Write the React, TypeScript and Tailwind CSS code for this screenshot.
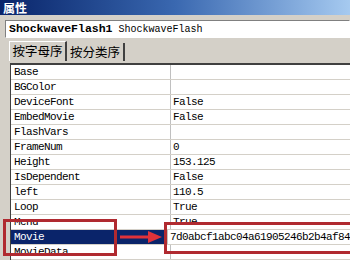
import React from "react";

const ROWS: [string, string][] = [
  ["Base", ""],
  ["BGColor", ""],
  ["DeviceFont", "False"],
  ["EmbedMovie", "False"],
  ["FlashVars", ""],
  ["FrameNum", "0"],
  ["Height", "153.125"],
  ["IsDependent", "False"],
  ["left", "110.5"],
  ["Loop", "True"],
  ["Menu", "True"],
  ["Movie", "7d0abcf1abc04a61905246b2b4af84"],
  ["MovieData", ""],
];

const mono = { fontFamily: '"Liberation Mono", "DejaVu Sans Mono", monospace' };
const cjk = { fontFamily: '"Noto Sans CJK SC", sans-serif' };

export default function App() {
  return (
    <div className="relative h-[260px] w-[350px] overflow-hidden bg-[#d4d0c8]">
      {/* title bar */}
      <div className="flex h-[15px] items-center bg-gradient-to-r from-[#0a246a] via-[#3a68b0] to-[#a6caf0] pl-[3px]">
        <span className="text-[12px] font-bold leading-[15px] text-white" style={cjk}>
          属性
        </span>
      </div>

      {/* object combo */}
      <div
        className="ml-[5px] mt-[5px] flex h-[18px] items-center whitespace-nowrap border border-b-white border-l-[#808080] border-r-white border-t-[#808080] bg-white pl-[3px]"
        style={mono}
      >
        <span className="text-[11.5px] font-bold text-black">ShockwaveFlash1</span>
        <span className="ml-[6px] text-[10px] text-black">ShockwaveFlash</span>
      </div>

      {/* tabs */}
      <div className="mt-[3px] flex h-[20px] items-end pl-[9px]" style={cjk}>
        <div className="flex h-[20px] w-[58px] items-center justify-center border-l border-t border-white border-r-2 border-r-[#404040] bg-[#d4d0c8] text-[12.5px] text-black">
          按字母序
        </div>
        <div className="flex h-[18px] w-[58px] items-center justify-center border-r-2 border-r-[#404040] text-[12.5px] text-black">
          按分类序
        </div>
      </div>

      {/* property grid */}
      <div
        className="ml-[10px] mt-[2px] border-l border-t-2 border-l-[#404040] border-t-[#404040] bg-white"
        style={mono}
      >
        {ROWS.map(([name, value]) => {
          const sel = name === "Movie";
          return (
            <div key={name} className="flex h-[15px] border-b border-[#d4d0c8]">
              <div
                className={[
                  "flex w-[160px] items-center border-r border-[#c0c0c0] pl-[3px] text-[11px] leading-none tracking-[-0.6px]",
                  sel ? "bg-[#0a246a] text-white" : "text-black",
                ].join(" ")}
              >
                {name}
              </div>
              <div className="flex flex-1 items-center whitespace-nowrap pl-[2px] text-[11px] leading-none tracking-[-0.6px] text-black">
                {value}
              </div>
            </div>
          );
        })}
      </div>

      {/* annotation boxes */}
      <div className="pointer-events-none absolute left-[3px] top-[219px] h-[37px] w-[114px] border-[3px] border-[#b02a30]" />
      <div className="pointer-events-none absolute left-[164px] top-[222px] h-[32px] w-[190px] border-[3px] border-[#b02a30]" />
      <svg className="pointer-events-none absolute left-[118px] top-[230px]" width="46" height="14" viewBox="0 0 46 14">
        <line x1="2" y1="7" x2="34" y2="7" stroke="#e0323a" strokeWidth="3" />
        <polygon points="30,1 44,7 30,13" fill="#e0323a" />
      </svg>
    </div>
  );
}
